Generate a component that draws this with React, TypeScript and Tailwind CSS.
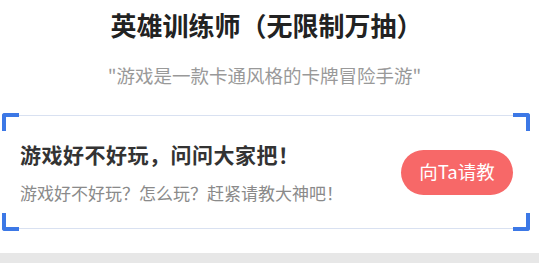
import React from "react";

const font = { fontFamily: '"Noto Sans CJK SC", "Noto Sans", sans-serif' };

function Corner({ pos }: { pos: "tl" | "tr" | "bl" | "br" }) {
  const map: Record<string, string> = {
    tl: "top-0 left-0 border-t-4 border-l-4 rounded-tl-[3px]",
    tr: "top-0 right-0 border-t-4 border-r-4 rounded-tr-[3px]",
    bl: "bottom-0 left-0 border-b-4 border-l-4 rounded-bl-[3px]",
    br: "bottom-0 right-0 border-b-4 border-r-4 rounded-br-[3px]",
  };
  return <div className={`absolute w-[17px] h-[18px] border-[#3c78e6] ${map[pos]}`} />;
}

export default function App() {
  return (
    <div className="w-[539px] h-[280px] bg-white overflow-hidden" style={font}>
      <div className="pt-[10px] flex flex-col items-center">
        <div className="text-[26px] leading-[30px] font-bold text-[#222] pr-[6px]">英雄训练师（无限制万抽）</div>
        <div className="mt-[23px] text-[18.5px] leading-[24px] text-[#999] pr-[10px]">"游戏是一款卡通风格的卡牌冒险手游"</div>
      </div>
      <div className="relative ml-[2px] mt-[26px] w-[528px] h-[118px]">
        <div className="absolute left-0 right-0 top-[2px] h-px bg-[#d9e1f1]" />
        <div className="absolute left-0 right-0 bottom-[2px] h-px bg-[#d9e1f1]" />
        <Corner pos="tl" />
        <Corner pos="tr" />
        <Corner pos="bl" />
        <Corner pos="br" />
        <div className="relative h-full flex items-center justify-between pl-[18px] pr-[17px]">
          <div className="flex flex-col">
            <div className="text-[21px] leading-[28px] font-bold text-[#333] tracking-[0.5px]">游戏好不好玩，问问大家把！</div>
            <div className="mt-[13px] text-[17px] leading-[24px] text-[#8a8a8a]">游戏好不好玩？怎么玩？赶紧请教大神吧！</div>
          </div>
          <div className="w-[112px] h-[45px] rounded-full bg-[#f76868] flex items-center justify-center text-white text-[18.5px]">
            向Ta请教
          </div>
        </div>
      </div>
      <div className="mt-[22px] h-[10px] bg-[#e7e7e7]" />
    </div>
  );
}
